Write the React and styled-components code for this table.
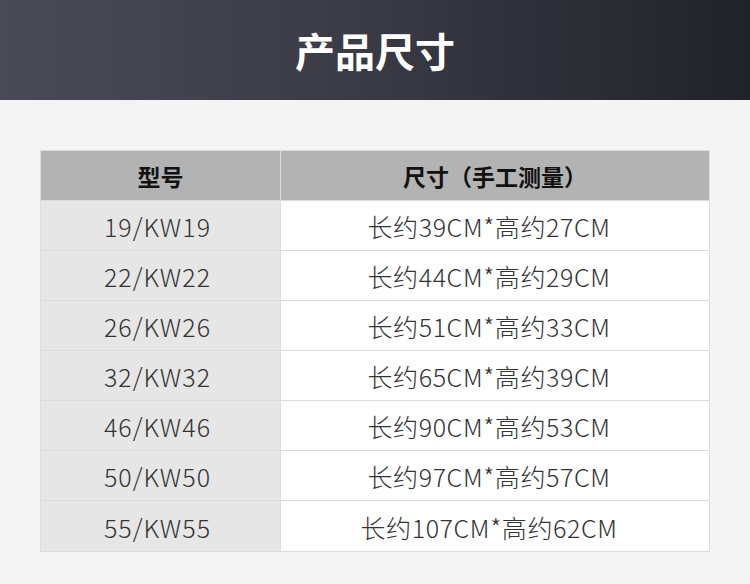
import React from "react";
import styled, { createGlobalStyle } from "styled-components";

const Global = createGlobalStyle`
  html, body { margin: 0; padding: 0; background: #f4f4f4; }
  body { font-family: "Noto Sans CJK SC", "Noto Sans", sans-serif; }
`;

const Page = styled.div`
  width: 750px;
  height: 584px;
  background: #f4f4f4;
  display: flex;
  flex-direction: column;
`;

const Banner = styled.header`
  height: 100px;
  background: linear-gradient(90deg, #4a4a57 0%, #3c3c47 45%, #22222a 100%);
  display: flex;
  align-items: center;
  justify-content: center;
`;

const Title = styled.h1`
  margin: 0;
  color: #ffffff;
  font-size: 40px;
  font-weight: 700;
  line-height: 1;
`;

const TableWrap = styled.div`
  padding: 50px 40px 0 40px;
`;

const Table = styled.div`
  display: grid;
  grid-template-columns: 239px 1fr;
  border: 1px solid #dcdcdc;
  width: 670px;
  box-sizing: border-box;
`;

const Cell = styled.div`
  height: 50px;
  box-sizing: border-box;
  display: flex;
  align-items: center;
  justify-content: center;
  border-bottom: ${(p) => (p.$last ? "none" : "1px solid #dcdcdc")};
  border-left: ${(p) => (p.$right ? "1px solid #dcdcdc" : "none")};
  background: ${(p) => (p.$head ? "#b3b3b3" : p.$right ? "#ffffff" : "#e6e6e6")};
  color: ${(p) => (p.$head ? "#111" : "#333")};
  font-size: ${(p) => (p.$head ? "23px" : "25px")};
  font-weight: ${(p) => (p.$head ? 700 : 300)};
  letter-spacing: ${(p) => (p.$head ? "0" : p.$right ? "0.6px" : "1px")};
  padding: 1px ${(p) => (p.$head ? "0" : p.$right ? "12px" : "6px")} 0 0;
`;

const rows = [
  ["19/KW19", "长约39CM*高约27CM"],
  ["22/KW22", "长约44CM*高约29CM"],
  ["26/KW26", "长约51CM*高约33CM"],
  ["32/KW32", "长约65CM*高约39CM"],
  ["46/KW46", "长约90CM*高约53CM"],
  ["50/KW50", "长约97CM*高约57CM"],
  ["55/KW55", "长约107CM*高约62CM"],
];

export default function App() {
  return (
    <Page>
      <Global />
      <Banner>
        <Title>产品尺寸</Title>
      </Banner>
      <TableWrap>
        <Table>
          <Cell $head>型号</Cell>
          <Cell $head $right>尺寸（手工测量）</Cell>
          {rows.map(([m, s], i) => (
            <React.Fragment key={m}>
              <Cell $last={i === rows.length - 1}>{m}</Cell>
              <Cell $right $last={i === rows.length - 1}>{s}</Cell>
            </React.Fragment>
          ))}
        </Table>
      </TableWrap>
    </Page>
  );
}
